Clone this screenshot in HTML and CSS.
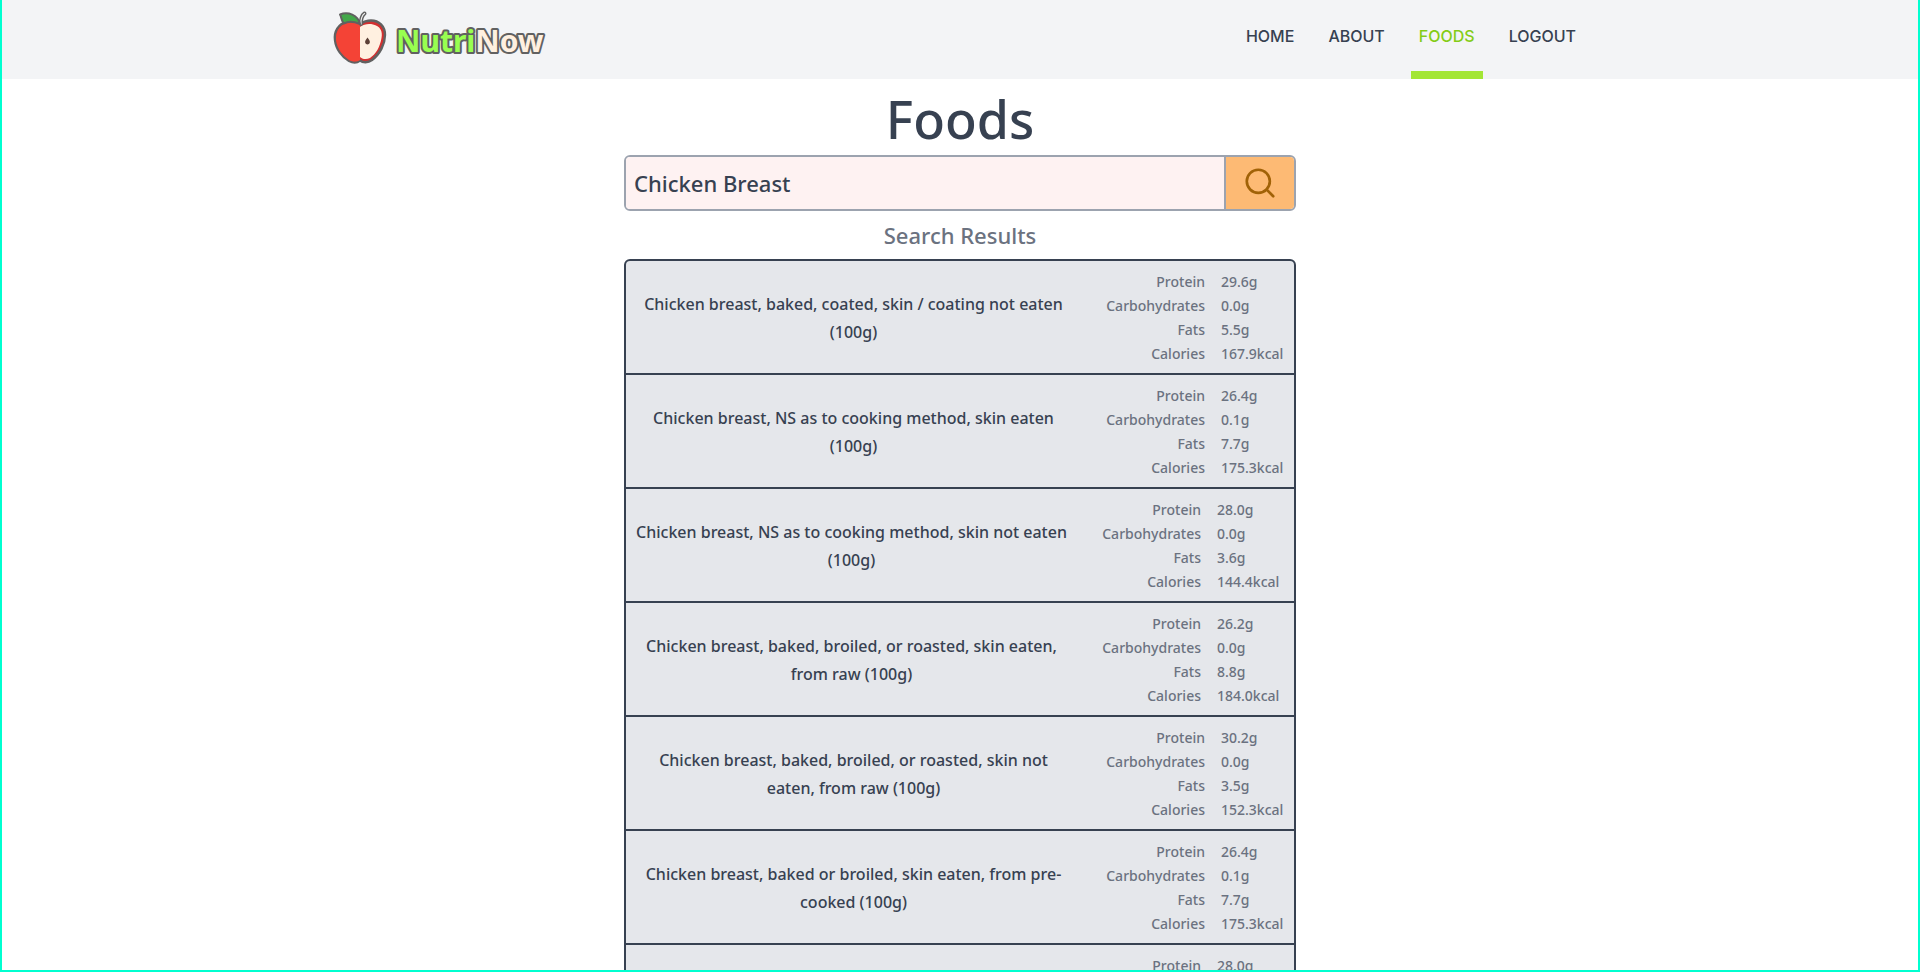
FILE: index.html
```html
<!DOCTYPE html>
<html lang="en">
<head>
  <meta charset="utf-8">
  <meta name="viewport" content="width=device-width, initial-scale=1">
  <title>NutriNow - Foods</title>
  <link rel="stylesheet" href="styles.css">
</head>
<body>
  <header class="header">
    <div class="header-inner">
      <a class="brand" href="#" aria-label="NutriNow">
        <svg class="brand-logo" width="220" height="60" viewBox="0 0 220 60" aria-hidden="true">
          <path d="M30 18C26 15.500 21 15 17 16C8 18 4 26 5 34C6 43 12 51 19 55C23 57 27 57 30 54.500C33 57 38 57 42 54C50 48 55 38 55 29C55 20 49 14.500 41 14.500C36 14.500 33 16 30 18Z" fill="#d32f2f" stroke="#616161" stroke-width="2.400" stroke-linejoin="round"/>
          <path d="M30 17C26 16 21 16 17 17C9 19 5.500 26 6 34C7 43 13 50 19 54C23 56 27 56 30 54Z" fill="#f44336"/>
          <path d="M30 21C34 18 39 17.500 43 18.500C50 20 53 25 51.500 32C50 41 46 48 40 52C36 54 32 53 30 51Z" fill="#fff0e0"/>
          <path d="M31 18C30.500 14 32 9 34.500 7.500" fill="none" stroke="#616161" stroke-width="4" stroke-linecap="round"/>
          <path d="M31 18C30.500 14 32 9 34.500 7.500" fill="none" stroke="#eeeeee" stroke-width="1.200" stroke-linecap="round"/>
          <path d="M10 8.500C18 5 28 9 30 18C24 15.500 18 15 14 17.500C11 15 12 12 10 8.500Z" fill="#43a84a" stroke="#616161" stroke-width="2" stroke-linejoin="round"/>
          <path d="M37.500 31.500C39 33.500 40.300 35 39.800 36.800C39 39 36 39 35.200 36.800C34.700 35 36 33.500 37.500 31.500Z" fill="#5d4037"/>
          <text class="brand-text" x="66" y="46"><tspan class="brand-green">Nutri</tspan><tspan class="brand-cream">Now</tspan></text>
        </svg>
      </a>
      <nav class="nav" aria-label="Main">
        <a class="nav-link" href="#">HOME</a>
        <a class="nav-link" href="#">ABOUT</a>
        <a class="nav-link nav-link-active" href="#" aria-current="page">FOODS</a>
        <a class="nav-link" href="#">LOGOUT</a>
      </nav>
    </div>
  </header>

  <main class="main">
    <h1 class="title">Foods</h1>
    <form class="search">
      <input class="search-input" type="text" aria-label="Search foods" value="Chicken Breast">
      <button class="search-button" type="button" aria-label="Search">
        <svg width="36" height="36" viewBox="0 0 256 256" fill="none" stroke="currentColor" stroke-width="19" stroke-linecap="round" aria-hidden="true">
          <circle cx="116" cy="116" r="82"/>
          <path d="M175.400 175.400L222 222"/>
        </svg>
      </button>
    </form>
    <h2 class="subtitle">Search Results</h2>
    <ul class="results">
      <li class="food">
        <p class="food-name">Chicken breast, baked, coated, skin / coating not eaten (100g)</p>
        <dl class="facts"><dt>Protein</dt><dd>29.6g</dd><dt>Carbohydrates</dt><dd>0.0g</dd><dt>Fats</dt><dd>5.5g</dd><dt>Calories</dt><dd>167.9kcal</dd></dl>
      </li>
      <li class="food">
        <p class="food-name">Chicken breast, NS as to cooking method, skin eaten (100g)</p>
        <dl class="facts"><dt>Protein</dt><dd>26.4g</dd><dt>Carbohydrates</dt><dd>0.1g</dd><dt>Fats</dt><dd>7.7g</dd><dt>Calories</dt><dd>175.3kcal</dd></dl>
      </li>
      <li class="food">
        <p class="food-name">Chicken breast, NS as to cooking method, skin not eaten (100g)</p>
        <dl class="facts facts-wide"><dt>Protein</dt><dd>28.0g</dd><dt>Carbohydrates</dt><dd>0.0g</dd><dt>Fats</dt><dd>3.6g</dd><dt>Calories</dt><dd>144.4kcal</dd></dl>
      </li>
      <li class="food">
        <p class="food-name">Chicken breast, baked, broiled, or roasted, skin eaten, from raw (100g)</p>
        <dl class="facts facts-wide"><dt>Protein</dt><dd>26.2g</dd><dt>Carbohydrates</dt><dd>0.0g</dd><dt>Fats</dt><dd>8.8g</dd><dt>Calories</dt><dd>184.0kcal</dd></dl>
      </li>
      <li class="food">
        <p class="food-name">Chicken breast, baked, broiled, or roasted, skin not eaten, from raw (100g)</p>
        <dl class="facts"><dt>Protein</dt><dd>30.2g</dd><dt>Carbohydrates</dt><dd>0.0g</dd><dt>Fats</dt><dd>3.5g</dd><dt>Calories</dt><dd>152.3kcal</dd></dl>
      </li>
      <li class="food">
        <p class="food-name">Chicken breast, baked or broiled, skin eaten, from pre-cooked (100g)</p>
        <dl class="facts"><dt>Protein</dt><dd>26.4g</dd><dt>Carbohydrates</dt><dd>0.1g</dd><dt>Fats</dt><dd>7.7g</dd><dt>Calories</dt><dd>175.3kcal</dd></dl>
      </li>
      <li class="food">
        <p class="food-name"></p>
        <dl class="facts facts-wide"><dt>Protein</dt><dd>28.0g</dd></dl>
      </li>
    </ul>
  </main>
</body>
</html>
```
FILE: styles.css
```css
* {
  box-sizing: border-box;
}

html {
  scrollbar-width: none;
}

body {
  margin: 0;
  background: #ffffff;
  color: #374151;
  font-family: "Noto Sans", sans-serif;
  font-weight: 500;
}

/* Frame drawn over the edges of the window */
body::after {
  content: "";
  position: fixed;
  inset: 0;
  border: 2px solid #00ffd0;
  border-top: 0;
  pointer-events: none;
}

.header {
  background: #f3f4f6;
}

.header-inner {
  display: flex;
  justify-content: space-between;
  max-width: 1280px;
  margin: 0 auto;
  padding: 0 16px 0 10px;
}

.brand {
  display: block;
  padding-top: 6px;
}

.brand-logo {
  display: block;
}

.brand-text {
  font-size: 30px;
  font-weight: 700;
  stroke: #616161;
  stroke-width: 4px;
  stroke-linejoin: round;
  paint-order: stroke;
}

.brand-green {
  fill: #98ff50;
}

.brand-cream {
  fill: #fff0e0;
}

.nav {
  display: flex;
  gap: 18px;
  font-family: Inter, sans-serif;
}

.nav-link {
  padding: 24px 8px 23px;
  border-bottom: 8px solid transparent;
  color: #374151;
  font-size: 16px;
  line-height: 24px;
  text-decoration: none;
}

.nav-link-active {
  border-color: #a3e635;
  color: #84cc16;
}

.main {
  max-width: 672px;
  margin: 0 auto;
}

.title {
  margin: 0;
  padding-top: 4px;
  font-size: 52px;
  font-weight: 500;
  line-height: 72px;
  text-align: center;
}

.search {
  display: flex;
  height: 56px;
  overflow: hidden;
  border: 2px solid #9ca3af;
  border-radius: 6px;
}

.search-input {
  flex: 1;
  min-width: 0;
  padding: 0 8px;
  border: 0;
  outline: 0;
  background: #fef2f2;
  color: #374151;
  font: inherit;
  font-size: 22px;
}

.search-button {
  display: flex;
  align-items: center;
  justify-content: center;
  width: 70px;
  padding: 0;
  border: 0;
  border-left: 2px solid #9ca3af;
  background: #fdba74;
  color: #a16207;
}

.subtitle {
  margin: 0;
  color: #6b7280;
  font-size: 22px;
  font-weight: 500;
  line-height: 48px;
  text-align: center;
}

.results {
  margin: 0;
  padding: 0;
  border: 2px solid #374151;
  border-radius: 6px;
  background: #e5e7eb;
  list-style: none;
}

.food {
  display: flex;
  align-items: center;
  padding: 9px 8px 7px;
}

.food + .food {
  border-top: 2px solid #374151;
}

.food-name {
  flex: 1;
  margin: 0;
  font-size: 16px;
  line-height: 28px;
  text-align: center;
}

.facts {
  display: grid;
  grid-template-columns: 102px 65px;
  column-gap: 16px;
  margin: 0;
  padding-left: 30px;
  color: #6b7280;
  font-size: 14px;
  line-height: 24px;
}

.facts-wide {
  grid-template-columns: 102px 69px;
}

.facts dt {
  text-align: right;
}

.facts dd {
  margin: 0;
}
```
